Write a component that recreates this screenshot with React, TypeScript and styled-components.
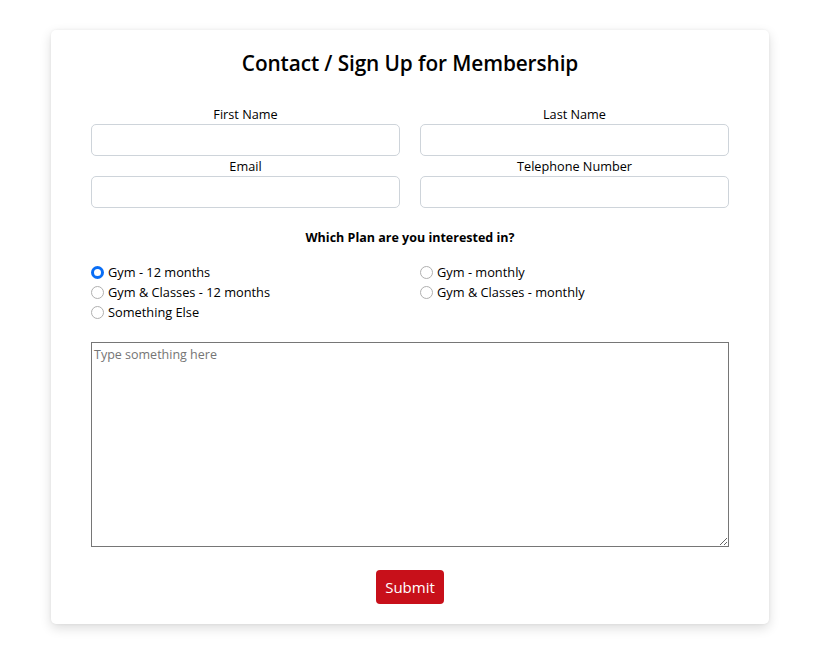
import React, { useState } from "react";
import styled, { createGlobalStyle } from "styled-components";

const Global = createGlobalStyle`
  html, body { margin: 0; padding: 0; background: #ffffff; }
  body { font-family: "Open Sans", "Noto Sans", sans-serif; color: #000; }
  * { box-sizing: border-box; }
`;

const Page = styled.div`
  padding: 30px 0 30px 51px;
`;

const Card = styled.form`
  width: 718px;
  background: #fff;
  border-radius: 5px;
  box-shadow: 0 4px 12px rgba(0, 0, 0, 0.14), 0 0 3px rgba(0, 0, 0, 0.06);
  padding: 19px 40px 20px;
  display: flex;
  flex-direction: column;
`;

const Title = styled.h1`
  margin: 0;
  font-size: 20.8px;
  font-weight: 600;
  text-align: center;
  line-height: 28px;
  letter-spacing: -0.1px;
`;

const FieldGrid = styled.div`
  margin-top: 28px;
  display: grid;
  grid-template-columns: 1fr 1fr;
  column-gap: 20px;
  row-gap: 1px;
`;

const Field = styled.label`
  display: flex;
  flex-direction: column;
  align-items: stretch;
`;

const Label = styled.span`
  font-size: 12.7px;
  line-height: 18px;
  text-align: center;
  margin-bottom: 1px;
`;

const Input = styled.input`
  height: 32px;
  border: 1px solid #ced4da;
  border-radius: 5px;
  font: inherit;
  padding: 0 8px;
  outline: none;
`;

const PlanHeading = styled.div`
  margin-top: 21px;
  text-align: center;
  font-weight: 700;
  font-size: 12.5px;
  line-height: 18px;
`;

const RadioGrid = styled.div`
  margin-top: 15px;
  display: grid;
  grid-template-columns: 1fr 1fr;
  column-gap: 20px;
  grid-auto-rows: 20px;
`;

const RadioRow = styled.label`
  display: flex;
  align-items: center;
  font-size: 12.8px;
  line-height: 20px;
  cursor: pointer;
`;

const Radio = styled.input.attrs({ type: "radio" })`
  appearance: none;
  -webkit-appearance: none;
  margin: 0 4px 0 0;
  width: 13px;
  height: 13px;
  border-radius: 50%;
  border: 1px solid #b0b0b0;
  background: #fff;
  flex: none;
  cursor: pointer;
  &:checked {
    border: 3.5px solid #0a6ef5;
  }
`;

const TextArea = styled.textarea`
  margin-top: 20px;
  height: 205px;
  width: 100%;
  border: 1px solid #767676;
  border-radius: 0;
  padding: 3px 2px;
  font: inherit;
  font-size: 12.5px;
  line-height: 18px;
  resize: both;
  outline: none;
  &::placeholder { color: #757575; }
`;

const SubmitRow = styled.div`
  margin-top: 23px;
  display: flex;
  justify-content: center;
`;

const Submit = styled.button`
  height: 34px;
  width: 68px;
  background: #c8101a;
  color: #fff;
  border: none;
  border-radius: 4px;
  font-family: inherit;
  font-size: 15px;
  cursor: pointer;
`;

const plans = [
  "Gym - 12 months",
  "Gym - monthly",
  "Gym & Classes - 12 months",
  "Gym & Classes - monthly",
  "Something Else",
];

export default function App() {
  const [plan, setPlan] = useState(plans[0]);
  return (
    <>
      <Global />
      <Page>
        <Card onSubmit={(e) => e.preventDefault()}>
          <Title>Contact / Sign Up for Membership</Title>
          <FieldGrid>
            <Field>
              <Label>First Name</Label>
              <Input type="text" />
            </Field>
            <Field>
              <Label>Last Name</Label>
              <Input type="text" />
            </Field>
            <Field>
              <Label>Email</Label>
              <Input type="email" />
            </Field>
            <Field>
              <Label>Telephone Number</Label>
              <Input type="tel" />
            </Field>
          </FieldGrid>
          <PlanHeading>Which Plan are you interested in?</PlanHeading>
          <RadioGrid>
            {plans.map((p) => (
              <RadioRow key={p}>
                <Radio name="plan" checked={plan === p} onChange={() => setPlan(p)} />
                {p}
              </RadioRow>
            ))}
          </RadioGrid>
          <TextArea placeholder="Type something here" />
          <SubmitRow>
            <Submit type="submit">Submit</Submit>
          </SubmitRow>
        </Card>
      </Page>
    </>
  );
}
